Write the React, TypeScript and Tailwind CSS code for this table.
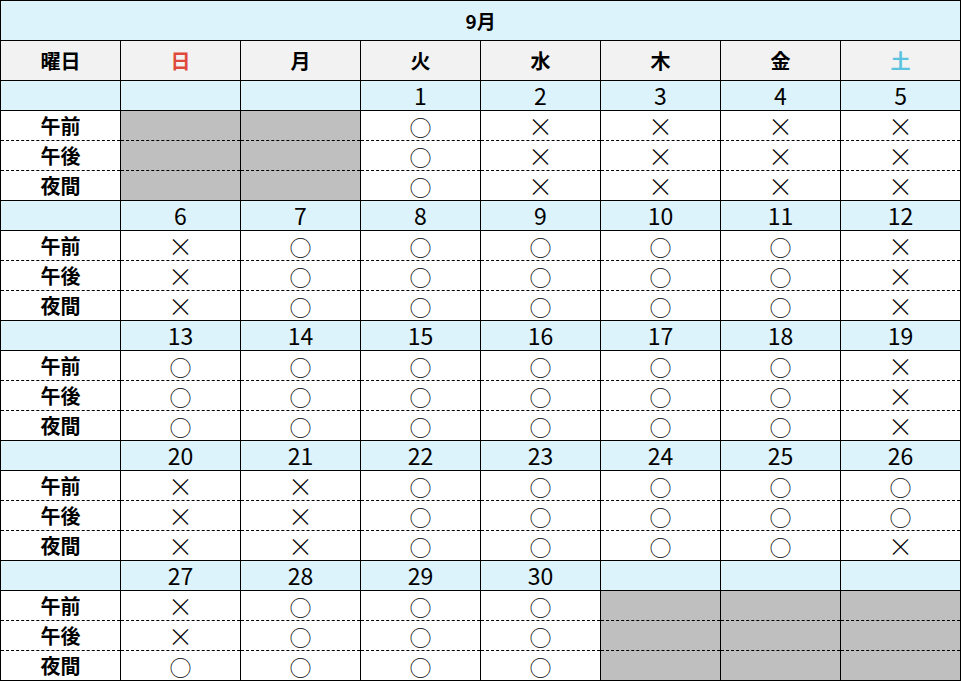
import React from "react";

type Mark = "o" | "x";

type Week = {
  dates: (number | null)[];
  // per day: [午前, 午後, 夜間], null = closed (gray)
  slots: (Mark[] | null)[];
};

const O: Mark[] = ["o", "o", "o"];
const X: Mark[] = ["x", "x", "x"];

const weeks: Week[] = [
  { dates: [null, null, 1, 2, 3, 4, 5], slots: [null, null, O, X, X, X, X] },
  { dates: [6, 7, 8, 9, 10, 11, 12], slots: [X, O, O, O, O, O, X] },
  { dates: [13, 14, 15, 16, 17, 18, 19], slots: [O, O, O, O, O, O, X] },
  { dates: [20, 21, 22, 23, 24, 25, 26], slots: [X, X, O, O, O, O, ["o", "o", "x"]] },
  { dates: [27, 28, 29, 30, null, null, null], slots: [["x", "x", "o"], O, O, O, null, null, null] },
];

const days = ["日", "月", "火", "水", "木", "金", "土"];
const labels = ["午前", "午後", "夜間"];

const font = { fontFamily: '"Noto Sans CJK JP", "Noto Sans", sans-serif' };

// fixed-height box so the glyph boxes never stretch the 30px rows
function Box({ children, className = "" }: { children?: React.ReactNode; className?: string }) {
  return <div className={`flex h-[22px] items-center justify-center leading-none ${className}`}>{children}</div>;
}

function Symbol({ m }: { m: Mark }) {
  if (m === "o") return <span className="text-[22px] font-light">○</span>;
  return <span className="text-[25px] font-extralight">×</span>;
}

export default function App() {
  return (
    <div className="w-[961px] h-[681px] bg-white text-black" style={font}>
      <table className="w-[961px] table-fixed border-collapse">
        <colgroup>
          <col className="w-[120px]" />
          {days.map((d) => (
            <col key={d} className="w-[120px]" />
          ))}
        </colgroup>
        <tbody>
          <tr className="h-[40px]">
            <td colSpan={8} className="border border-black bg-[#ddf3fb]">
              <Box className="text-[19px] font-bold">9月</Box>
            </td>
          </tr>
          <tr className="h-[40px]">
            <td className="border border-black bg-[#f2f2f2]">
              <Box className="text-[20px] font-bold">曜日</Box>
            </td>
            {days.map((d, i) => (
              <td key={d} className="border border-black bg-[#f2f2f2]">
                <Box
                  className={
                    "text-[20px] font-bold " + (i === 0 ? "text-[#e0483a]" : i === 6 ? "text-[#5bc3e0]" : "")
                  }
                >
                  {d}
                </Box>
              </td>
            ))}
          </tr>
          {weeks.map((w, wi) => (
            <React.Fragment key={wi}>
              <tr className="h-[30px]">
                <td className="border border-black bg-[#ddf3fb]" />
                {w.dates.map((d, di) => (
                  <td key={di} className="border border-black bg-[#ddf3fb]">
                    <Box className="text-[23px] font-normal">{d ?? ""}</Box>
                  </td>
                ))}
              </tr>
              {labels.map((lab, li) => {
                const bt = li === 0 ? "" : "[border-top-style:dashed]";
                const bb = li === 2 ? "" : "[border-bottom-style:dashed]";
                return (
                  <tr key={lab} className="h-[30px]">
                    <td className={`border border-black ${bt} ${bb}`}>
                      <Box className="text-[20px] font-bold">{lab}</Box>
                    </td>
                    {w.slots.map((s, di) => (
                      <td key={di} className={`border border-black ${bt} ${bb} ${s ? "" : "bg-[#bfbfbf]"}`}>
                        {s ? (
                          <Box>
                            <Symbol m={s[li]} />
                          </Box>
                        ) : null}
                      </td>
                    ))}
                  </tr>
                );
              })}
            </React.Fragment>
          ))}
        </tbody>
      </table>
    </div>
  );
}
